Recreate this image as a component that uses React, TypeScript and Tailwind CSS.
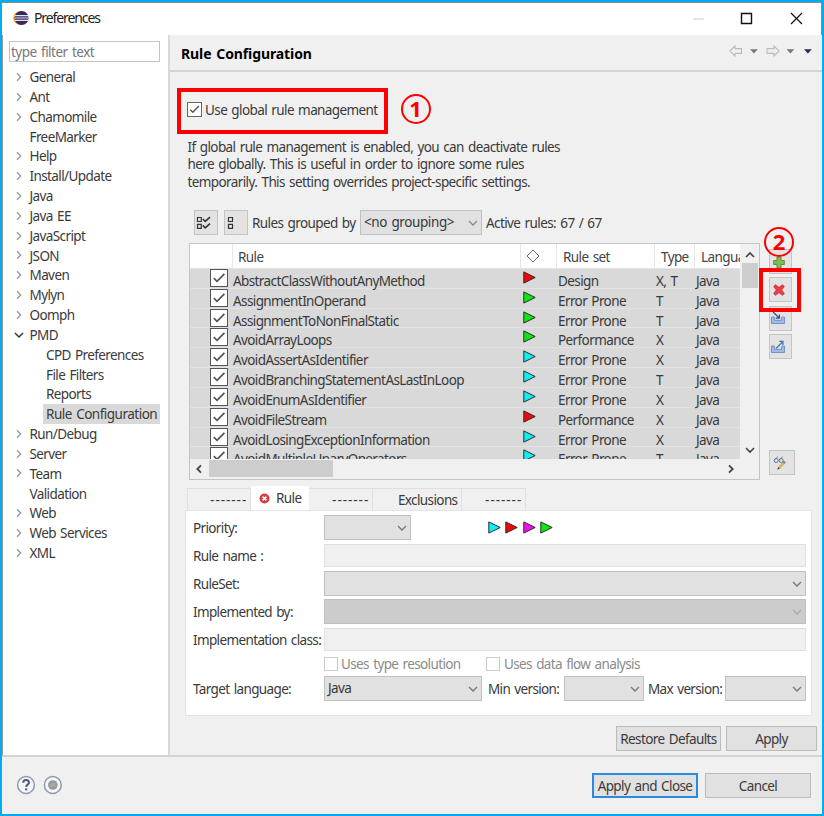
import type { ReactNode } from "react"
import clsx from "clsx"

type TreeItem = { label: string; state?: "closed" | "open"; child?: boolean; selected?: boolean }

const tree: TreeItem[] = [
    { label: "General", state: "closed" },
    { label: "Ant", state: "closed" },
    { label: "Chamomile", state: "closed" },
    { label: "FreeMarker" },
    { label: "Help", state: "closed" },
    { label: "Install/Update", state: "closed" },
    { label: "Java", state: "closed" },
    { label: "Java EE", state: "closed" },
    { label: "JavaScript", state: "closed" },
    { label: "JSON", state: "closed" },
    { label: "Maven", state: "closed" },
    { label: "Mylyn", state: "closed" },
    { label: "Oomph", state: "closed" },
    { label: "PMD", state: "open" },
    { label: "CPD Preferences", child: true },
    { label: "File Filters", child: true },
    { label: "Reports", child: true },
    { label: "Rule Configuration", child: true, selected: true },
    { label: "Run/Debug", state: "closed" },
    { label: "Server", state: "closed" },
    { label: "Team", state: "closed" },
    { label: "Validation" },
    { label: "Web", state: "closed" },
    { label: "Web Services", state: "closed" },
    { label: "XML", state: "closed" },
]

const RED = "#f50505"
const GREEN = "#0ce80c"
const CYAN = "#0ff0f5"
const MAGENTA = "#f50cf0"

const rules = [
    { name: "AbstractClassWithoutAnyMethod", color: RED, set: "Design", type: "X, T" },
    { name: "AssignmentInOperand", color: GREEN, set: "Error Prone", type: "T" },
    { name: "AssignmentToNonFinalStatic", color: GREEN, set: "Error Prone", type: "T" },
    { name: "AvoidArrayLoops", color: GREEN, set: "Performance", type: "X" },
    { name: "AvoidAssertAsIdentifier", color: CYAN, set: "Error Prone", type: "X" },
    { name: "AvoidBranchingStatementAsLastInLoop", color: CYAN, set: "Error Prone", type: "T" },
    { name: "AvoidEnumAsIdentifier", color: CYAN, set: "Error Prone", type: "X" },
    { name: "AvoidFileStream", color: RED, set: "Performance", type: "X" },
    { name: "AvoidLosingExceptionInformation", color: CYAN, set: "Error Prone", type: "X" },
    { name: "AvoidMultipleUnaryOperators", color: CYAN, set: "Error Prone", type: "T" },
]

function Chevron({ dir, className }: { dir: "up" | "down" | "left" | "right"; className?: string }) {
    const d = {
        up: "M1 7 5 3 9 7",
        down: "M1 3 5 7 9 3",
        left: "M7 1.3 3.3 5 7 8.7",
        right: "M3 1.3 6.7 5 3 8.7",
    }[dir]
    return (
        <svg viewBox="0 0 10 10" className={clsx("size-[10px] shrink-0", className)} fill="none" stroke="currentColor">
            <path d={d} />
        </svg>
    )
}

function Triangle({ color }: { color: string }) {
    return (
        <svg width="13" height="13" viewBox="0 0 13 13" className="shrink-0">
            <path d="M.8 .9 12.2 6.5 .8 12.1Z" fill={color} stroke="#2b2b2b" strokeWidth="1" />
        </svg>
    )
}

function CheckBox({ className, checked }: { className: string; checked?: boolean }) {
    return (
        <span className={clsx("block shrink-0 border bg-white", className)}>
            {checked && (
                <svg viewBox="0 0 16 16" className="size-full" fill="none" stroke="#555" strokeWidth="1.7">
                    <path d="M2.8 8.2 6 11.4 13.4 3.8" />
                </svg>
            )}
        </span>
    )
}

function Select({ className, children, arrow }: { className: string; children?: ReactNode; arrow?: string }) {
    return (
        <div className={clsx("flex h-[25px] shrink-0 items-center justify-between border-[1.5px] border-[#c0c0c0] px-[3px]", className)}>
            <span>{children}</span>
            <Chevron dir="down" className={clsx("stroke-[1.3]", arrow ?? "text-[#777]")} />
        </div>
    )
}

function Button({ className, children }: { className: string; children: ReactNode }) {
    return (
        <div className={clsx("flex h-[25px] shrink-0 items-center justify-center bg-[#e1e1e1] whitespace-pre", className)}>
            {children}
        </div>
    )
}

function IconButton({ className, children }: { className: string; children: ReactNode }) {
    return (
        <div className={clsx("flex h-[25px] shrink-0 items-center border-[1.5px] border-[#c4c4c4] bg-[#e3e3e3]", className)}>{children}</div>
    )
}

function Tray({ out }: { out?: boolean }) {
    return (
        <svg width="17" height="16" viewBox="0 0 17 16" fill="none">
            <path d="M1.5 7v6.5h13V7h-2.8v3.3H4.3V7z" fill="#a0bbe4" stroke="#6f93cc" />
            {out ? (
                <path d="M6 9.5 12.5 3M9.3 2.4H13v3.7" stroke="#4673a8" strokeWidth="1.2" />
            ) : (
                <path d="M3 2 9 7.8M9.4 4.5v3.7H5.7" stroke="#36506f" strokeWidth="1.2" />
            )}
        </svg>
    )
}

function TitleBar() {
    return (
        <div className="flex h-[33px] shrink-0 items-center border-t border-r border-[#8b8b8b] bg-white pr-[17px] pb-[2px] pl-[11px]">
            <svg width="16" height="16" viewBox="0 0 16 16">
                <circle cx="7" cy="8" r="6.8" fill="#f5a13a" />
                <circle cx="8.6" cy="8" r="7" fill="#33285f" />
                <path d="M2 5.7h13.2M1.7 8h14M2 10.3h13.2" stroke="#e6e3f3" strokeWidth="1.2" />
            </svg>
            <span className="ml-[5px] flex-1 pb-[1px] text-[14px] tracking-[-1.1px] text-[#222]">Preferences</span>
            <svg width="112" height="14" viewBox="0 0 112 14" fill="none" stroke="#111" strokeWidth="1.4">
                <path d="M1 8h11" stroke="#ccc" strokeWidth="1" />
                <path d="M49.5 2.5h10v10h-10z" />
                <path d="m99 2 11 11M110 2l-11 11" strokeWidth="1.2" />
            </svg>
        </div>
    )
}

function Sidebar() {
    return (
        <div className="flex w-[165px] shrink-0 flex-col bg-white pt-[6px] pl-[6px]">
            <div className="flex h-[21px] w-[151px] items-center border-[1.5px] border-[#c4c4c4] pt-[1px] pl-[1px] text-[#777]">
                <span className="tracking-[-0.5px]">type filter text</span>
            </div>
            <div className="mt-[5px] flex flex-col">
                {tree.map((item) => (
                    <div key={item.label} className="flex h-[19.83px] items-center">
                        <span className={clsx("flex shrink-0 items-center pl-[5px]", item.child ? "w-[34px]" : "w-[20.5px]")}>
                            {item.state && (
                                <Chevron
                                    dir={item.state === "open" ? "down" : "right"}
                                    className={item.state === "open" ? "text-[#333] stroke-[1.5]" : "text-[#999] stroke-[1.3]"}
                                />
                            )}
                        </span>
                        <span className={clsx("h-[19.5px] leading-[20px]", item.child && "pl-[3px]", item.selected && "w-[117px] bg-[#d9d9d9] tracking-[-0.5px]")}>
                            {item.label}
                        </span>
                    </div>
                ))}
            </div>
        </div>
    )
}

function HistoryNav() {
    return (
        <svg width="84" height="12" viewBox="0 0 84 12" fill="none" stroke="#bbb" strokeWidth="1.1">
            <path d="M1 6 6 1v2.6h6.5v4.8H6V11z" />
            <path d="M21 4.2h7.8L24.9 8.4z" fill="#777" stroke="none" />
            <path d="M50 6 45 1v2.6h-7v4.8h7V11z" />
            <path d="M57.5 4.2h7.8L61.4 8.4z" fill="#777" stroke="none" />
            <path d="M75 4.2h7.8L78.9 8.4z" fill="#352450" stroke="none" />
        </svg>
    )
}

function Toolbar() {
    return (
        <div className="ml-[24px] mt-[19px] flex h-[25px] items-center">
            <IconButton className="w-[24px] pl-[1px]">
                <svg width="15" height="14" viewBox="0 0 15 14" fill="none" stroke="#333" strokeWidth="1.2">
                    <path d="M1.5 1.5h3.8v4H1.5zM1.5 8.3h3.8v4H1.5z" />
                    <path d="m6.8 3 2.4 2.4L14 1.2M6.8 9.4l2.4 2.4L14 7.6" strokeWidth="1.6" />
                </svg>
            </IconButton>
            <IconButton className="ml-[6px] w-[24px] pl-[2px]">
                <svg width="8" height="14" viewBox="0 0 8 14" fill="none" stroke="#333" strokeWidth="1.2">
                    <path d="M1.5 1.5h4v4h-4zM1.5 8.3h4v4h-4z" />
                </svg>
            </IconButton>
            <span className="ml-[4px] w-[108px] pt-[1px] whitespace-nowrap">Rules grouped by</span>
            <Select className="w-[122px] bg-[#e1e1e1]" arrow="text-[#888]">
                <span className="tracking-[-0.4px]">&lt;no grouping&gt;</span>
            </Select>
            <span className="ml-[4px] pt-[1px]">Active rules: 67 / 67</span>
        </div>
    )
}

function RuleTable() {
    return (
        <div className="flex h-[237px] w-[571px] shrink-0 flex-col border-[1.5px] border-[#c4c4c4] bg-[#f0f0f0]">
            <div className="flex h-[215px]">
                <div className="w-[550px] shrink-0 overflow-hidden">
                    <div className="flex h-[24px] items-center bg-white leading-[26px] text-[#444]">
                        <span className="h-full w-[43px] border-r border-[#e8e8e8]" />
                        <span className="h-full w-[287px] pl-[5px]">Rule</span>
                        <span className="flex h-full w-[37px] items-center border-x border-[#e8e8e8] pl-[5px]">
                            <svg width="14" height="14" viewBox="0 0 14 14" fill="none" stroke="#666">
                                <path d="M7 1 13 7 7 13 1 7z" />
                            </svg>
                        </span>
                        <span className="h-full w-[98px] border-r border-[#e8e8e8] pl-[6px]">Rule set</span>
                        <span className="h-full w-[40px] border-r border-[#e8e8e8] pl-[6px]">Type</span>
                        <span className="h-full w-[45px] overflow-hidden pl-[6px]">Language</span>
                    </div>
                    {rules.map((rule) => (
                        <div key={rule.name} className="flex h-[19.83px] border-t border-[#e3e3e3] bg-[#d9d9d9]">
                            <span className="w-[43px] shrink-0 pl-[20px]">
                                <CheckBox checked className="size-[18px] border-[#555]" />
                            </span>
                            <span className="h-[19px] w-[287px] shrink-0 leading-[25px]">{rule.name}</span>
                            <span className="w-[38px] shrink-0 pt-[2px] pl-[3px]">
                                <Triangle color={rule.color} />
                            </span>
                            <span className="h-[19px] w-[98px] shrink-0 leading-[25px]">{rule.set}</span>
                            <span className="h-[19px] w-[40px] shrink-0 leading-[25px]">{rule.type}</span>
                            <span className="h-[19px] leading-[25px]">Java</span>
                        </div>
                    ))}
                </div>
                <div className="flex w-[19px] flex-col items-center pt-[6px] pb-[4px]">
                    <Chevron dir="up" className="stroke-[1.6] text-[#444]" />
                    <div className="mt-[3px] h-[25px] w-[16px] bg-[#cdcdcd]" />
                    <Chevron dir="down" className="mt-auto stroke-[1.6] text-[#444]" />
                </div>
            </div>
            <div className="flex h-[19px] items-center pr-[23px] pl-[4px]">
                <Chevron dir="left" className="stroke-[1.8] text-[#444]" />
                <div className="ml-[5px] h-[17px] w-[124px] bg-[#cdcdcd]" />
                <Chevron dir="right" className="ml-auto stroke-[1.8] text-[#444]" />
            </div>
        </div>
    )
}

function SideButtons() {
    return (
        <div className="ml-[9px] flex flex-col pt-[6px]">
            <IconButton className="w-[23px] pl-[1px]">
                <svg width="16" height="16" viewBox="0 0 16 16">
                    <path d="M6 3h4v3.5h3.3v4H10V14H6v-3.5H2.7v-4H6z" fill="#83b95b" stroke="#5c9437" />
                </svg>
            </IconButton>
            <IconButton className="mt-[3.4px] w-[23px] pl-[1px]">
                <svg width="16" height="16" viewBox="0 0 16 16">
                    <path d="M3 4.5 4.5 3 8 5.7 11.5 3 13 4.5 10.5 8l2.5 3.5-1.5 1.5L8 10.3 4.5 13 3 11.5 5.5 8z" fill="#e8434b" stroke="#d93840" strokeWidth="1.2" />
                </svg>
            </IconButton>
            <IconButton className="mt-[3.4px] w-[23px]"><Tray /></IconButton>
            <IconButton className="mt-[3.4px] w-[23px]"><Tray out /></IconButton>
            <IconButton className="mt-[91px] w-[26px] pl-[3px]">
                <svg width="16" height="16" viewBox="0 0 16 16" fill="none">
                    <path d="M2.3 4.5 4.8 1.5M7.2 4.5 9.7 1.5" stroke="#6e89a8" />
                    <circle cx="3.2" cy="5.5" r="2" stroke="#56769c" />
                    <circle cx="8.2" cy="5.5" r="2" stroke="#56769c" />
                    <path d="m6 13 4.5-5" stroke="#dcb366" strokeWidth="2.8" />
                    <path d="m10.3 8.2 1.6-1.7" stroke="#a5875b" strokeWidth="2.8" />
                    <path d="m4.2 14.7 1-2.7 1.8 1.6z" fill="#5c4b33" />
                </svg>
            </IconButton>
        </div>
    )
}

function Tabs() {
    const dashes = <span className="mr-[-0.7px] pt-[1px] tracking-[0.95px]">-------</span>
    const tab = "flex h-[22px] items-center justify-end border-t border-r border-[#e0e0e0] pr-[3.5px]"
    return (
        <div className="ml-[17px] mt-[6px] flex h-[24px] items-end">
            <div className={clsx(tab, "w-[64px] border-l")}>{dashes}</div>
            <div className="flex h-[24px] w-[58px] items-center bg-white pl-[8px]">
                <svg width="11" height="11" viewBox="0 0 11 11">
                    <circle cx="5.5" cy="5.5" r="5" fill="#d83d3d" />
                    <path d="m3.6 3.6 3.8 3.8M7.4 3.6 3.6 7.4" stroke="#fff" strokeWidth="1.5" />
                </svg>
                <span className="ml-[6px] pt-[1px]">Rule</span>
            </div>
            <div className={clsx(tab, "w-[64px]")}>{dashes}</div>
            <div className={clsx(tab, "w-[89px]")}><span className="pt-[1px]">Exclusions</span></div>
            <div className={clsx(tab, "w-[64px]")}>{dashes}</div>
        </div>
    )
}

function Field({ label, children, className }: { label: string; children: ReactNode; className: string }) {
    return (
        <div className={clsx("flex items-center", className)}>
            <span className="w-[131px] shrink-0 pt-[1px] tracking-[-0.63px] whitespace-nowrap">{label}</span>
            {children}
        </div>
    )
}

function RuleForm() {
    const input = "h-[23px] w-[482px] border-[1.5px] border-[#e0e0e0] bg-[#f0f0f0]"
    return (
        <div className="ml-[15px] h-[206px] w-[627px] border-[1.5px] border-[#e3e3e3] bg-white pt-[4px] pl-[7px]">
            <Field label="Priority:" className="h-[25px]">
                <Select className="w-[87px] bg-[#e1e1e1]" />
                <div className="ml-[77px] flex gap-[4.4px]">
                    {[CYAN, RED, MAGENTA, GREEN].map((color) => (
                        <Triangle key={color} color={color} />
                    ))}
                </div>
            </Field>
            <Field label="Rule name :" className="mt-[4px] h-[23px]">
                <div className={input} />
            </Field>
            <Field label="RuleSet:" className="mt-[4px] h-[25px]">
                <Select className="w-[482px] bg-[#e1e1e1]" />
            </Field>
            <Field label="Implemented by:" className="mt-[3px] h-[25px]">
                <Select className="w-[482px] bg-[#cccccc]" arrow="text-[#aaa]" />
            </Field>
            <Field label="Implementation class:" className="mt-[4px] h-[23px]">
                <div className={input} />
            </Field>
            <div className="mt-[5px] flex h-[16px] items-center pl-[131px] tracking-[-0.62px] text-[#8b8b8b]">
                <CheckBox className="size-[14px] border-[#ccc]" />
                <span className="ml-[3px] w-[145px]">Uses type resolution</span>
                <CheckBox className="size-[14px] border-[#ccc]" />
                <span className="ml-[4px]">Uses data flow analysis</span>
            </div>
            <Field label="Target language:" className="mt-[4px] h-[25px]">
                <Select className="w-[158px] bg-[#e1e1e1]">Java</Select>
                <span className="ml-[6px] w-[76px] pt-[1px] tracking-[-0.65px] whitespace-nowrap">Min version:</span>
                <Select className="w-[80px] bg-[#e1e1e1]" />
                <span className="ml-[4px] w-[77px] pt-[1px] tracking-[-0.65px] whitespace-nowrap">Max version:</span>
                <Select className="w-[81px] bg-[#e1e1e1]" />
            </Field>
        </div>
    )
}

// numbered callout drawn over the dialog
function Marker({ n, className }: { n: number; className: string }) {
    return (
        <div className={clsx("absolute flex size-[30px] items-center justify-center rounded-full border-2 border-[#f00] pb-[2px] font-['Noto_Sans'] text-[22px] leading-none font-bold tracking-normal text-[#f00]", className)}>
            {n}
        </div>
    )
}

export default function App() {
    return (
        <div className="relative flex h-[816px] w-[824px] flex-col overflow-hidden border-2 border-[#00adef] bg-[#f0f0f0] font-['Noto_Sans',sans-serif] text-[13.5px] leading-[17px] tracking-[-0.6px] [word-spacing:1.3px] text-[#3a3a3a]">
            <TitleBar />
            <div className="flex h-[720px] shrink-0">
                <div className="w-px bg-[#999]" />
                <Sidebar />
                <div className="w-[2px] bg-[#d9d9d9]" />
                <div className="flex flex-1 flex-col">
                    <div className="flex h-[35px] shrink-0 items-center justify-between pt-[2px] pr-[9px] pl-[11px] text-[14px] font-bold tracking-[-0.1px] text-black">
                        Rule Configuration
                        <div className="pb-[6px]"><HistoryNav /></div>
                    </div>
                    <div className="h-[2px] shrink-0 bg-[#d4d4d4]" />
                    <div className="ml-[17px] mt-[30px] flex h-[15px] items-center">
                        <CheckBox checked className="size-[15px] border-[#666]" />
                        <span className="ml-[3px] pt-[1px]">Use global rule management</span>
                    </div>
                    <div className="ml-[17.5px] mt-[22px] flex h-[52px] flex-col leading-[17.3px] whitespace-nowrap">
                        <p>If global rule management is enabled, you can deactivate rules</p>
                        <p>here globally. This is useful in order to ignore some rules</p>
                        <p>temporarily. This setting overrides project-specific settings.</p>
                    </div>
                    <Toolbar />
                    <div className="ml-[19px] mt-[8px] flex">
                        <RuleTable />
                        <SideButtons />
                    </div>
                    <Tabs />
                    <RuleForm />
                    <div className="mt-[10px] flex justify-end gap-[5px] pr-[5px]">
                        <Button className="w-[105px] border-[1.5px] border-[#bbb] pt-[1px]">Restore Defaults</Button>
                        <Button className="w-[91px] border-[1.5px] border-[#bbb] pt-[1px]">Apply</Button>
                    </div>
                </div>
            </div>
            <div className="h-[2px] shrink-0 bg-[#d4d4d4]" />
            <div className="flex flex-1 items-center pr-[11px] pl-[14px]">
                <svg width="46" height="20" viewBox="0 0 46 20" fill="none" stroke="#8d9bb0" strokeWidth="1.5" className="mb-[2px]">
                    <circle cx="10" cy="10" r="8.4" fill="#f4f6fa" />
                    <path d="M7.2 7.8c0-3.7 5.8-3.6 5.8-.3 0 2-2.8 2.3-2.8 4.5" stroke="#4a5b80" strokeWidth="2" />
                    <path d="M9.1 13.4h2.2v2H9.1z" fill="#4a5b80" stroke="none" />
                    <circle cx="36.8" cy="10" r="8.4" fill="#f6f6f6" />
                    <circle cx="36.8" cy="10" r="4.8" fill="#999" stroke="none" />
                    <path d="M34 9h5.6M34 11h5.6" stroke="#b8b8b8" strokeWidth=".8" />
                </svg>
                <Button className="ml-auto w-[106px] border-2 border-[#2a8ae0] pt-[1px]">Apply and Close</Button>
                <Button className="ml-[7px] w-[106px] border-[1.5px] border-[#bbb] pt-[1px]">Cancel</Button>
            </div>

            <div className="absolute top-[86px] left-[175px] h-[46px] w-[211px] border-4 border-[#f00]" />
            <Marker n={1} className="top-[92px] left-[398.5px]" />
            <div className="absolute top-[266px] left-[757px] h-[44px] w-[42px] border-4 border-[#f00]" />
            <Marker n={2} className="top-[225px] left-[762px]" />
        </div>
    )
}
